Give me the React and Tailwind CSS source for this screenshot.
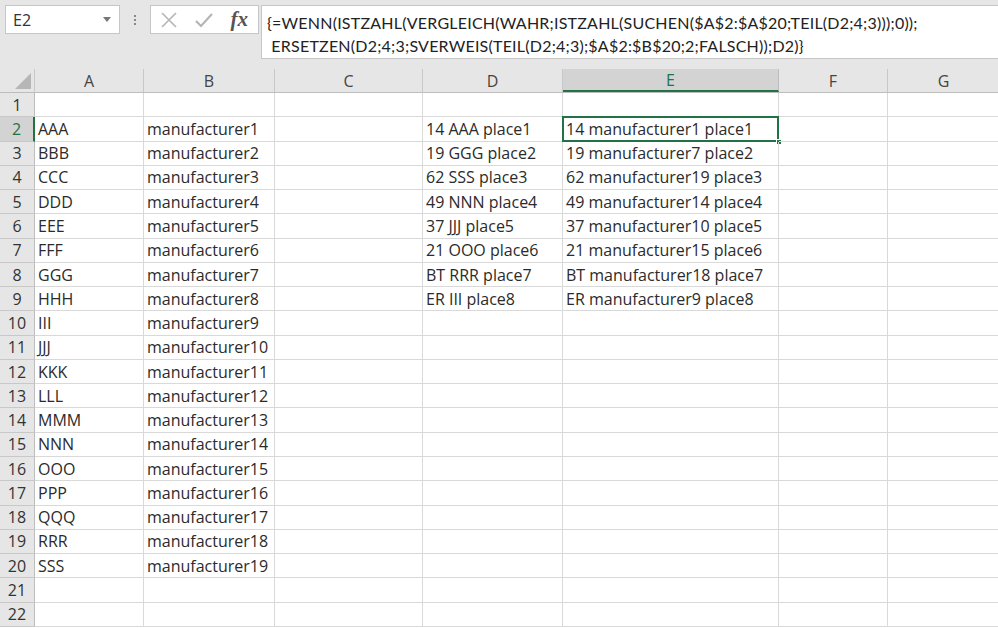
import React from 'react';

const cols = [
  { key: 'A', w: 'w-[109px]' },
  { key: 'B', w: 'w-[131px]' },
  { key: 'C', w: 'w-[148px]' },
  { key: 'D', w: 'w-[140px]' },
  { key: 'E', w: 'w-[216px]' },
  { key: 'F', w: 'w-[109px]' },
  { key: 'G', w: 'w-[112px]' },
];

const colA = ['', 'AAA', 'BBB', 'CCC', 'DDD', 'EEE', 'FFF', 'GGG', 'HHH', 'III', 'JJJ', 'KKK', 'LLL', 'MMM', 'NNN', 'OOO', 'PPP', 'QQQ', 'RRR', 'SSS', '', ''];
const colD = ['', '14 AAA place1', '19 GGG place2', '62 SSS place3', '49 NNN place4', '37 JJJ place5', '21 OOO place6', 'BT RRR place7', 'ER III place8'];
const colE = ['', '14 manufacturer1 place1', '19 manufacturer7 place2', '62 manufacturer19 place3', '49 manufacturer14 place4', '37 manufacturer10 place5', '21 manufacturer15 place6', 'BT manufacturer18 place7', 'ER manufacturer9 place8'];

const rows = Array.from({ length: 22 }, (_, i) => ({
  n: i + 1,
  A: colA[i] || '',
  B: i >= 1 && i <= 19 ? `manufacturer${i}` : '',
  C: '',
  D: colD[i] || '',
  E: colE[i] || '',
  F: '',
  G: '',
}));

function FormulaBar() {
  return (
    <div className="flex items-start h-[69px] bg-[#e6e6e6] pt-[5px]">
      <div className="ml-[5px] w-[115px] h-[29px] bg-white border border-[#c6c6c6] flex items-center justify-between pl-[7px] pr-[8px] text-[16px] text-[#333]">
        <span>E2</span>
        <svg width="8" height="5" viewBox="0 0 8 5"><path d="M0 0h8L4 5z" fill="#777" /></svg>
      </div>
      <div className="w-[30px] h-[29px] flex flex-col items-center justify-center gap-[2px]">
        <span className="w-[2px] h-[2px] bg-[#888]" />
        <span className="w-[2px] h-[2px] bg-[#888]" />
        <span className="w-[2px] h-[2px] bg-[#888]" />
      </div>
      <div className="w-[109px] h-[29px] bg-white border border-[#c6c6c6] flex items-center justify-between px-[9px]">
        <svg width="18" height="18" viewBox="0 0 18 18"><path d="M2 2l14 14M16 2L2 16" stroke="#b5b5b5" strokeWidth="1.6" /></svg>
        <svg width="20" height="18" viewBox="0 0 20 18"><path d="M2 10l5 5L18 3" stroke="#b5b5b5" strokeWidth="2.2" fill="none" /></svg>
        <span className="text-[21px] italic font-bold text-[#555] leading-none pr-[1px]" style={{ fontFamily: '"Liberation Serif", serif' }}>fx</span>
      </div>
      <div
        className="ml-[2px] flex-1 h-[54px] bg-white border border-[#c6c6c6] border-r-0 pl-[5px] pt-[5px] text-[16px] tracking-[0.22px] leading-[23px] text-[#222] whitespace-pre"
        style={{ fontFamily: 'Lato, "Open Sans", sans-serif' }}
      >
        <div>{'{=WENN(ISTZAHL(VERGLEICH(WAHR;ISTZAHL(SUCHEN($A$2:$A$20;TEIL(D2;4;3)));0));'}</div>
        <div>{' ERSETZEN(D2;4;3;SVERWEIS(TEIL(D2;4;3);$A$2:$B$20;2;FALSCH));D2)}'}</div>
      </div>
    </div>
  );
}

function HeaderRow() {
  return (
    <div className="flex h-[24px] bg-[#e6e6e6] border-b border-[#bdbdbd]">
      <div className="w-[35px] shrink-0 border-r border-[#c8c8c8] relative flex items-end justify-end pr-[3px] pb-[3px]">
        <svg width="16" height="16" viewBox="0 0 16 16"><path d="M16 0V16H0z" fill="#b6b6b6" /></svg>
      </div>
      {cols.map((c) => (
        <div
          key={c.key}
          className={`${c.w} shrink-0 flex items-center justify-center text-[16px] ${
            c.key === 'E'
              ? 'bg-[#d3d3d3] text-[#217346] border-b-2 border-[#217346] border-r border-r-[#bdbdbd]'
              : 'text-[#444] border-r border-[#c8c8c8]'
          }`}
        >
          {c.key}
        </div>
      ))}
    </div>
  );
}

function Row({ r }) {
  const sel = r.n === 2;
  return (
    <div className="flex h-[24.27px]">
      <div
        className={`w-[35px] shrink-0 flex items-center justify-center text-[16px] border-b border-[#c8c8c8] ${
          sel ? 'bg-[#d3d3d3] text-[#217346] border-r-2 border-r-[#217346]' : 'bg-[#e6e6e6] text-[#333] border-r border-r-[#bdbdbd]'
        }`}
      >
        {r.n}
      </div>
      {cols.map((c) => (
        <div
          key={c.key}
          className={`${c.w} shrink-0 relative flex items-center pl-[3px] text-[16px] text-[#2b2b2b] whitespace-nowrap border-r border-b border-[#d9d9d9]`}
        >
          {r[c.key]}
          {sel && c.key === 'E' && (
            <>
              <div className="absolute -left-[1px] -top-[1px] -right-[1px] -bottom-[1px] border-2 border-[#217346]" />
              <div className="absolute -right-[4px] -bottom-[4px] w-[6px] h-[6px] bg-[#217346] border border-white" />
            </>
          )}
        </div>
      ))}
    </div>
  );
}

export default function App() {
  return (
    <div className="w-[998px] h-[628px] overflow-hidden bg-white" style={{ fontFamily: '"Open Sans", Lato, sans-serif' }}>
      <FormulaBar />
      <HeaderRow />
      {rows.map((r) => (
        <Row key={r.n} r={r} />
      ))}
    </div>
  );
}
